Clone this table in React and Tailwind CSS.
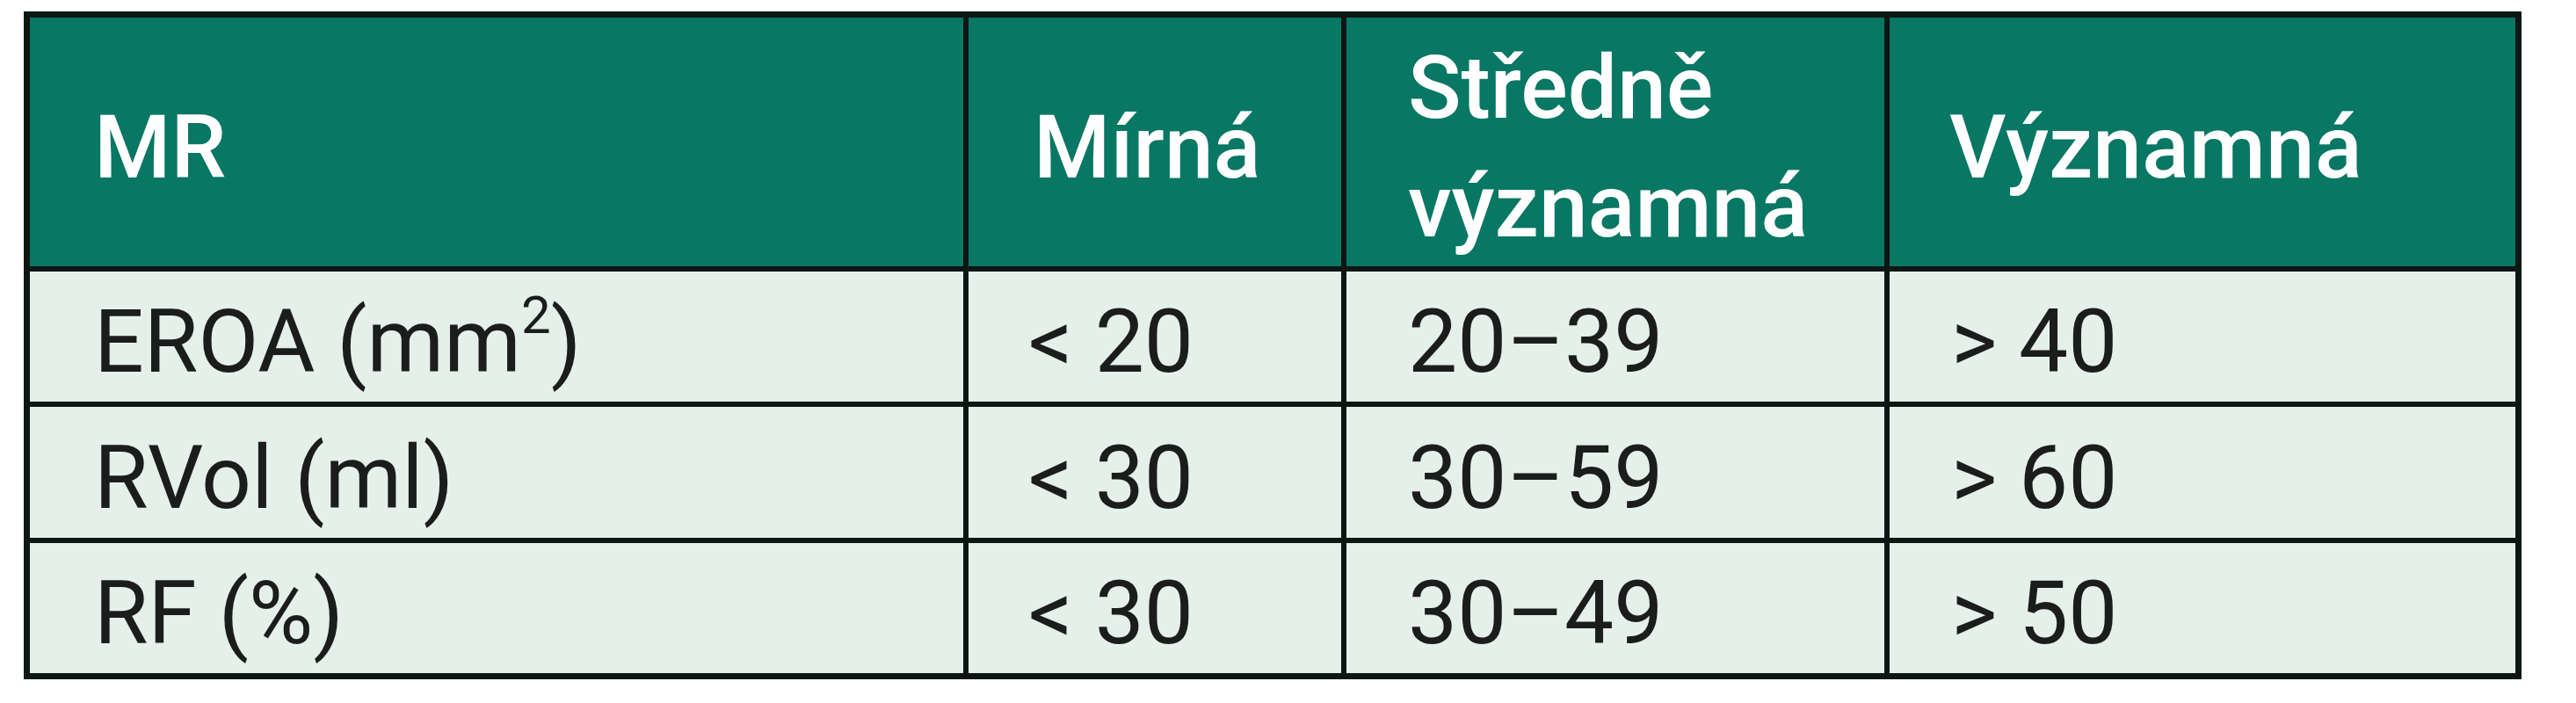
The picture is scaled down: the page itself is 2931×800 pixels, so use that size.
const HEAD = ["MR", "Mírná", "Středně významná", "Významná"]

const ROWS = [
  [<>EROA (mm<sup className="top-[-0.5em] text-[60%]">2</sup>)</>, "< 20", "20–39", "> 40"],
  ["RVol (ml)", "< 30", "30–59", "> 60"],
  ["RF (%)", "< 30", "30–49", "> 50"],
]

export default function App() {
  return (
    <div className="min-h-screen bg-white pl-[27px] pt-[13px] font-['Roboto',sans-serif]">
      <div className="grid w-fit grid-cols-[1062px_424px_612px_712px] grid-rows-[283px_148px_149px_148px] gap-[6px] bg-[#0c1613] p-[7px]">
        {HEAD.map((h, i) => (
          <div
            key={h}
            className={`flex items-center bg-[#087763] pt-[11px] text-[100px] font-medium leading-[135px] text-white ${
              i === 0 ? "pl-[73px]" : i === 1 ? "pl-[74px]" : i === 2 ? "pl-[70px] pr-[20px]" : "pl-[68px]"
            }`}
          >
            {h}
          </div>
        ))}
        {ROWS.map((row, r) =>
          row.map((cell, c) => (
            <div
              key={`${r}-${c}`}
              className={`flex items-center whitespace-nowrap bg-[#e6f0eb] pt-[12px] text-[100px] font-normal leading-[120px] text-[#1b1d1c] ${
                c === 0 ? "pl-[73px]" : c === 1 ? "pl-[68px]" : "pl-[70px]"
              }`}
            >
              {cell}
            </div>
          ))
        )}
      </div>
    </div>
  )
}
